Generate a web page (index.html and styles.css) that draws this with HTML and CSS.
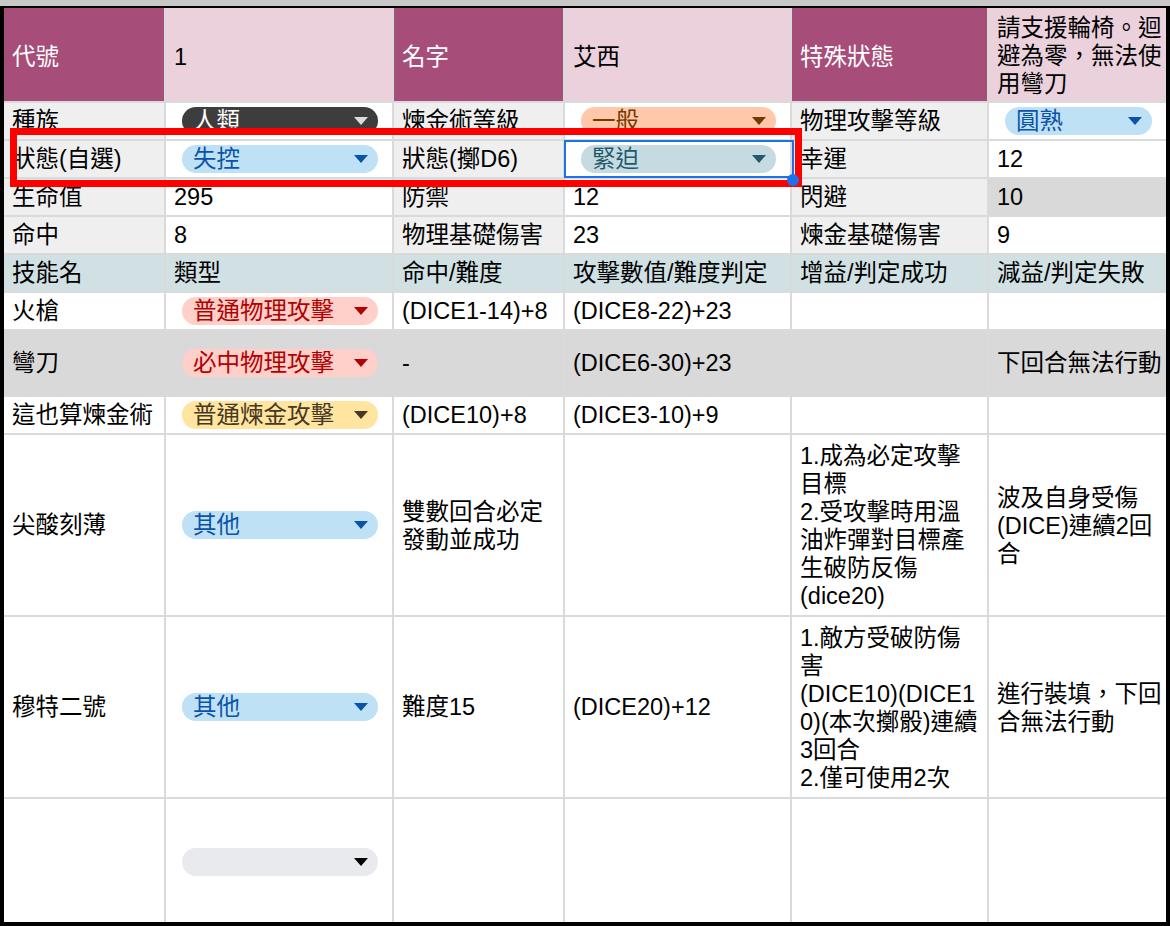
FILE: index.html
```html
<!DOCTYPE html>
<html lang="zh-Hant">
<head>
<meta charset="utf-8">
<title>角色卡</title>
<link rel="stylesheet" href="styles.css">
</head>
<body>
<div class="topbar"></div>
<div class="sheet">
  <!-- row 1 -->
  <div class="c hd top">代號</div>
  <div class="c hl top">1</div>
  <div class="c hd top">名字</div>
  <div class="c hl top">艾西</div>
  <div class="c hd top">特殊狀態</div>
  <div class="c hl"><div>請支援輪椅。迴<br>避為零，無法使<br>用彎刀</div></div>
  <!-- row 2 -->
  <div class="c lb">種族</div>
  <div class="c ch"><span class="chip dark">人類<i class="ar"></i></span></div>
  <div class="c lb">煉金術等級</div>
  <div class="c ch"><span class="chip orange">一般<i class="ar"></i></span></div>
  <div class="c lb">物理攻擊等級</div>
  <div class="c ch"><span class="chip blue">圓熟<i class="ar"></i></span></div>
  <!-- row 3 -->
  <div class="c lb">狀態(自選)</div>
  <div class="c ch"><span class="chip blue">失控<i class="ar"></i></span></div>
  <div class="c lb">狀態(擲D6)</div>
  <div class="c ch sel"><span class="chip teal">緊迫<i class="ar"></i></span></div>
  <div class="c lb">幸運</div>
  <div class="c">12</div>
  <!-- row 4 -->
  <div class="c lb">生命值</div>
  <div class="c">295</div>
  <div class="c lb">防禦</div>
  <div class="c">12</div>
  <div class="c lb">閃避</div>
  <div class="c gr">10</div>
  <!-- row 5 -->
  <div class="c lb">命中</div>
  <div class="c">8</div>
  <div class="c lb">物理基礎傷害</div>
  <div class="c">23</div>
  <div class="c lb">煉金基礎傷害</div>
  <div class="c">9</div>
  <!-- row 6 -->
  <div class="c cy">技能名</div>
  <div class="c cy">類型</div>
  <div class="c cy">命中/難度</div>
  <div class="c cy">攻擊數值/難度判定</div>
  <div class="c cy">增益/判定成功</div>
  <div class="c cy">減益/判定失敗</div>
  <!-- row 7 -->
  <div class="c">火槍</div>
  <div class="c ch"><span class="chip red">普通物理攻擊<i class="ar"></i></span></div>
  <div class="c">(DICE1-14)+8</div>
  <div class="c">(DICE8-22)+23</div>
  <div class="c"></div>
  <div class="c"></div>
  <!-- row 8 -->
  <div class="c gr">彎刀</div>
  <div class="c ch gr"><span class="chip red">必中物理攻擊<i class="ar"></i></span></div>
  <div class="c gr">-</div>
  <div class="c gr">(DICE6-30)+23</div>
  <div class="c gr"></div>
  <div class="c gr">下回合無法行動</div>
  <!-- row 9 -->
  <div class="c">這也算煉金術</div>
  <div class="c ch"><span class="chip yellow">普通煉金攻擊<i class="ar"></i></span></div>
  <div class="c">(DICE10)+8</div>
  <div class="c">(DICE3-10)+9</div>
  <div class="c"></div>
  <div class="c"></div>
  <!-- row 10 -->
  <div class="c">尖酸刻薄</div>
  <div class="c ch"><span class="chip blue">其他<i class="ar"></i></span></div>
  <div class="c"><div>雙數回合必定<br>發動並成功</div></div>
  <div class="c"></div>
  <div class="c"><div>1.成為必定攻擊<br>目標<br>2.受攻擊時用溫<br>油炸彈對目標產<br>生破防反傷<br>(dice20)</div></div>
  <div class="c"><div>波及自身受傷<br>(DICE)連續2回<br>合</div></div>
  <!-- row 11 -->
  <div class="c">穆特二號</div>
  <div class="c ch"><span class="chip blue">其他<i class="ar"></i></span></div>
  <div class="c">難度15</div>
  <div class="c">(DICE20)+12</div>
  <div class="c"><div>1.敵方受破防傷<br>害<br>(DICE10)(DICE1<br>0)(本次擲骰)連續<br>3回合<br>2.僅可使用2次</div></div>
  <div class="c"><div>進行裝填，下回<br>合無法行動</div></div>
  <!-- row 12 -->
  <div class="c"></div>
  <div class="c ch"><span class="chip empty"><i class="ar"></i></span></div>
  <div class="c"></div>
  <div class="c"></div>
  <div class="c"></div>
  <div class="c"></div>

  <div class="mark"></div>
</div>
</body>
</html>
```
FILE: styles.css
```css
html, body {
  margin: 0;
  padding: 0;
}
body {
  background: #000;
  width: 1170px;
  height: 926px;
  overflow: hidden;
  font-family: "Liberation Sans", "Noto Sans CJK TC", sans-serif;
  font-size: 23.5px;
  line-height: 28px;
  color: #000;
}
.topbar {
  height: 6px;
  background: #c8c8c8;
  margin-bottom: 2px;
}
.sheet {
  position: relative;
  margin-left: 4px;
  width: 1162px;
  height: 914px;
  overflow: hidden;
  display: grid;
  grid-template-columns: 160px 226px 169px 225px 195px 177px;
  grid-template-rows: 93px 36px 36px 36px 36px 36px 36px 64px 36px 180px 180px 126px;
  gap: 2px;
  background: #dadada;
}
.c {
  background: #fff;
  padding: 0 8px;
  display: flex;
  align-items: center;
  overflow: hidden;
  white-space: nowrap;
  position: relative;
}
.c > div {
  padding-top: 2px;
}
.top {
  padding-top: 5px;
}
.hd {
  background: #a64d79;
  color: #fff;
}
.hl {
  background: #ead1dc;
}
.lb {
  background: #efefef;
}
.gr {
  background: #d9d9d9;
}
.cy {
  background: #d0e0e3;
}
.ch {
  padding: 0 14px 0 16px;
}
.chip {
  flex: 1;
  height: 28px;
  border-radius: 14px;
  padding: 0 11px;
  display: flex;
  align-items: center;
  justify-content: space-between;
  line-height: 28px;
}
.ar {
  width: 0;
  height: 0;
  border-left: 7px solid transparent;
  border-right: 7px solid transparent;
  border-top: 8px solid currentColor;
  margin-left: auto;
  margin-right: -1px;
}
.dark { background: #3d3d3d; color: #fff; }
.dark .ar { border-top-color: #dcdcdc; }
.orange { background: #ffc8aa; color: #753800; }
.blue { background: #bfe1f6; color: #0a53a8; }
.teal { background: #c6dbe1; color: #215a6c; }
.red { background: #ffcfc9; color: #b10202; }
.yellow { background: #ffe5a0; color: #473821; }
.empty { background: #e8eaed; color: #000; }

.sel {
  overflow: visible;
}
.sel::after {
  content: "";
  position: absolute;
  left: -1px;
  top: -1px;
  right: -4px;
  bottom: -1px;
  border: 2px solid #1a73e8;
  z-index: 2;
}
.sel::before {
  content: "";
  position: absolute;
  right: -9px;
  bottom: -9px;
  width: 12px;
  height: 12px;
  border-radius: 50%;
  background: #1a73e8;
  z-index: 4;
}
.mark {
  position: absolute;
  left: 6px;
  top: 120px;
  width: 778px;
  height: 45px;
  border: 7px solid #ff0000;
  z-index: 3;
  pointer-events: none;
}
```
